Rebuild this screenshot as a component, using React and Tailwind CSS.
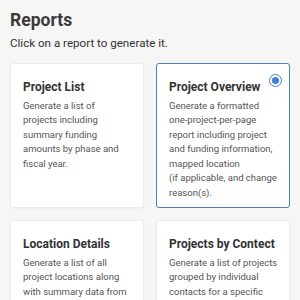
import React from "react";

const cards = [
  { title: "Project List", lines: ["Generate a list of", "projects including", "summary funding", "amounts by phase and", "fiscal year."], selected: false },
  { title: "Project Overview", lines: ["Generate a formatted", "one-project-per-page", "report including project", "and funding information,", "mapped location", "(if applicable, and change", "reason(s)."], selected: true },
  { title: "Location Details", lines: ["Generate a list of all", "project locations along", "with summary data from", "the project record."], selected: false },
  { title: "Projects by Contect", lines: ["Generate a list of projects", "grouped by individual", "contacts for a specific", "project role."], selected: false },
];

export default function App() {
  return (
    <div className="w-[300px] h-[300px] overflow-hidden bg-[#f6f6f6] px-[10px] pt-[9px] text-[#333]" style={{ fontFamily: "Roboto, 'Liberation Sans', sans-serif" }}>
      <h1 className="text-[17.5px] font-bold leading-[22px] text-[#3a3a3a]">Reports</h1>
      <p className="mt-[4px] text-[11.6px] leading-[16px] text-[#333]">Click on a report to generate it.</p>
      <div className="mt-[12px] grid grid-cols-2 gap-x-[12px] gap-y-[12px]">
        {cards.map((c) => (
          <div
            key={c.title}
            className={
              "relative h-[145px] rounded-[3px] bg-white px-[12px] pt-[15px] " +
              (c.selected ? "border-[1.5px] border-[#4f7fbd]" : "border border-[#ececec] shadow-[0_1px_2px_rgba(0,0,0,0.03)]")
            }
          >
            {c.selected && (
              <div className="absolute right-[7px] top-[10px] flex h-[13px] w-[13px] items-center justify-center rounded-full border-[1.5px] border-[#4f7fbd] bg-white">
                <div className="h-[7px] w-[7px] rounded-full bg-[#3f7fd6]" />
              </div>
            )}
            <div className="text-[12px] font-bold leading-[16px] text-[#333]">{c.title}</div>
            <div className="mt-[3.5px] text-[9.5px] leading-[14.5px] text-[#555]">
              {c.lines.map((l, i) => (
                <div key={i} className="whitespace-nowrap">{l}</div>
              ))}
            </div>
          </div>
        ))}
      </div>
    </div>
  );
}
